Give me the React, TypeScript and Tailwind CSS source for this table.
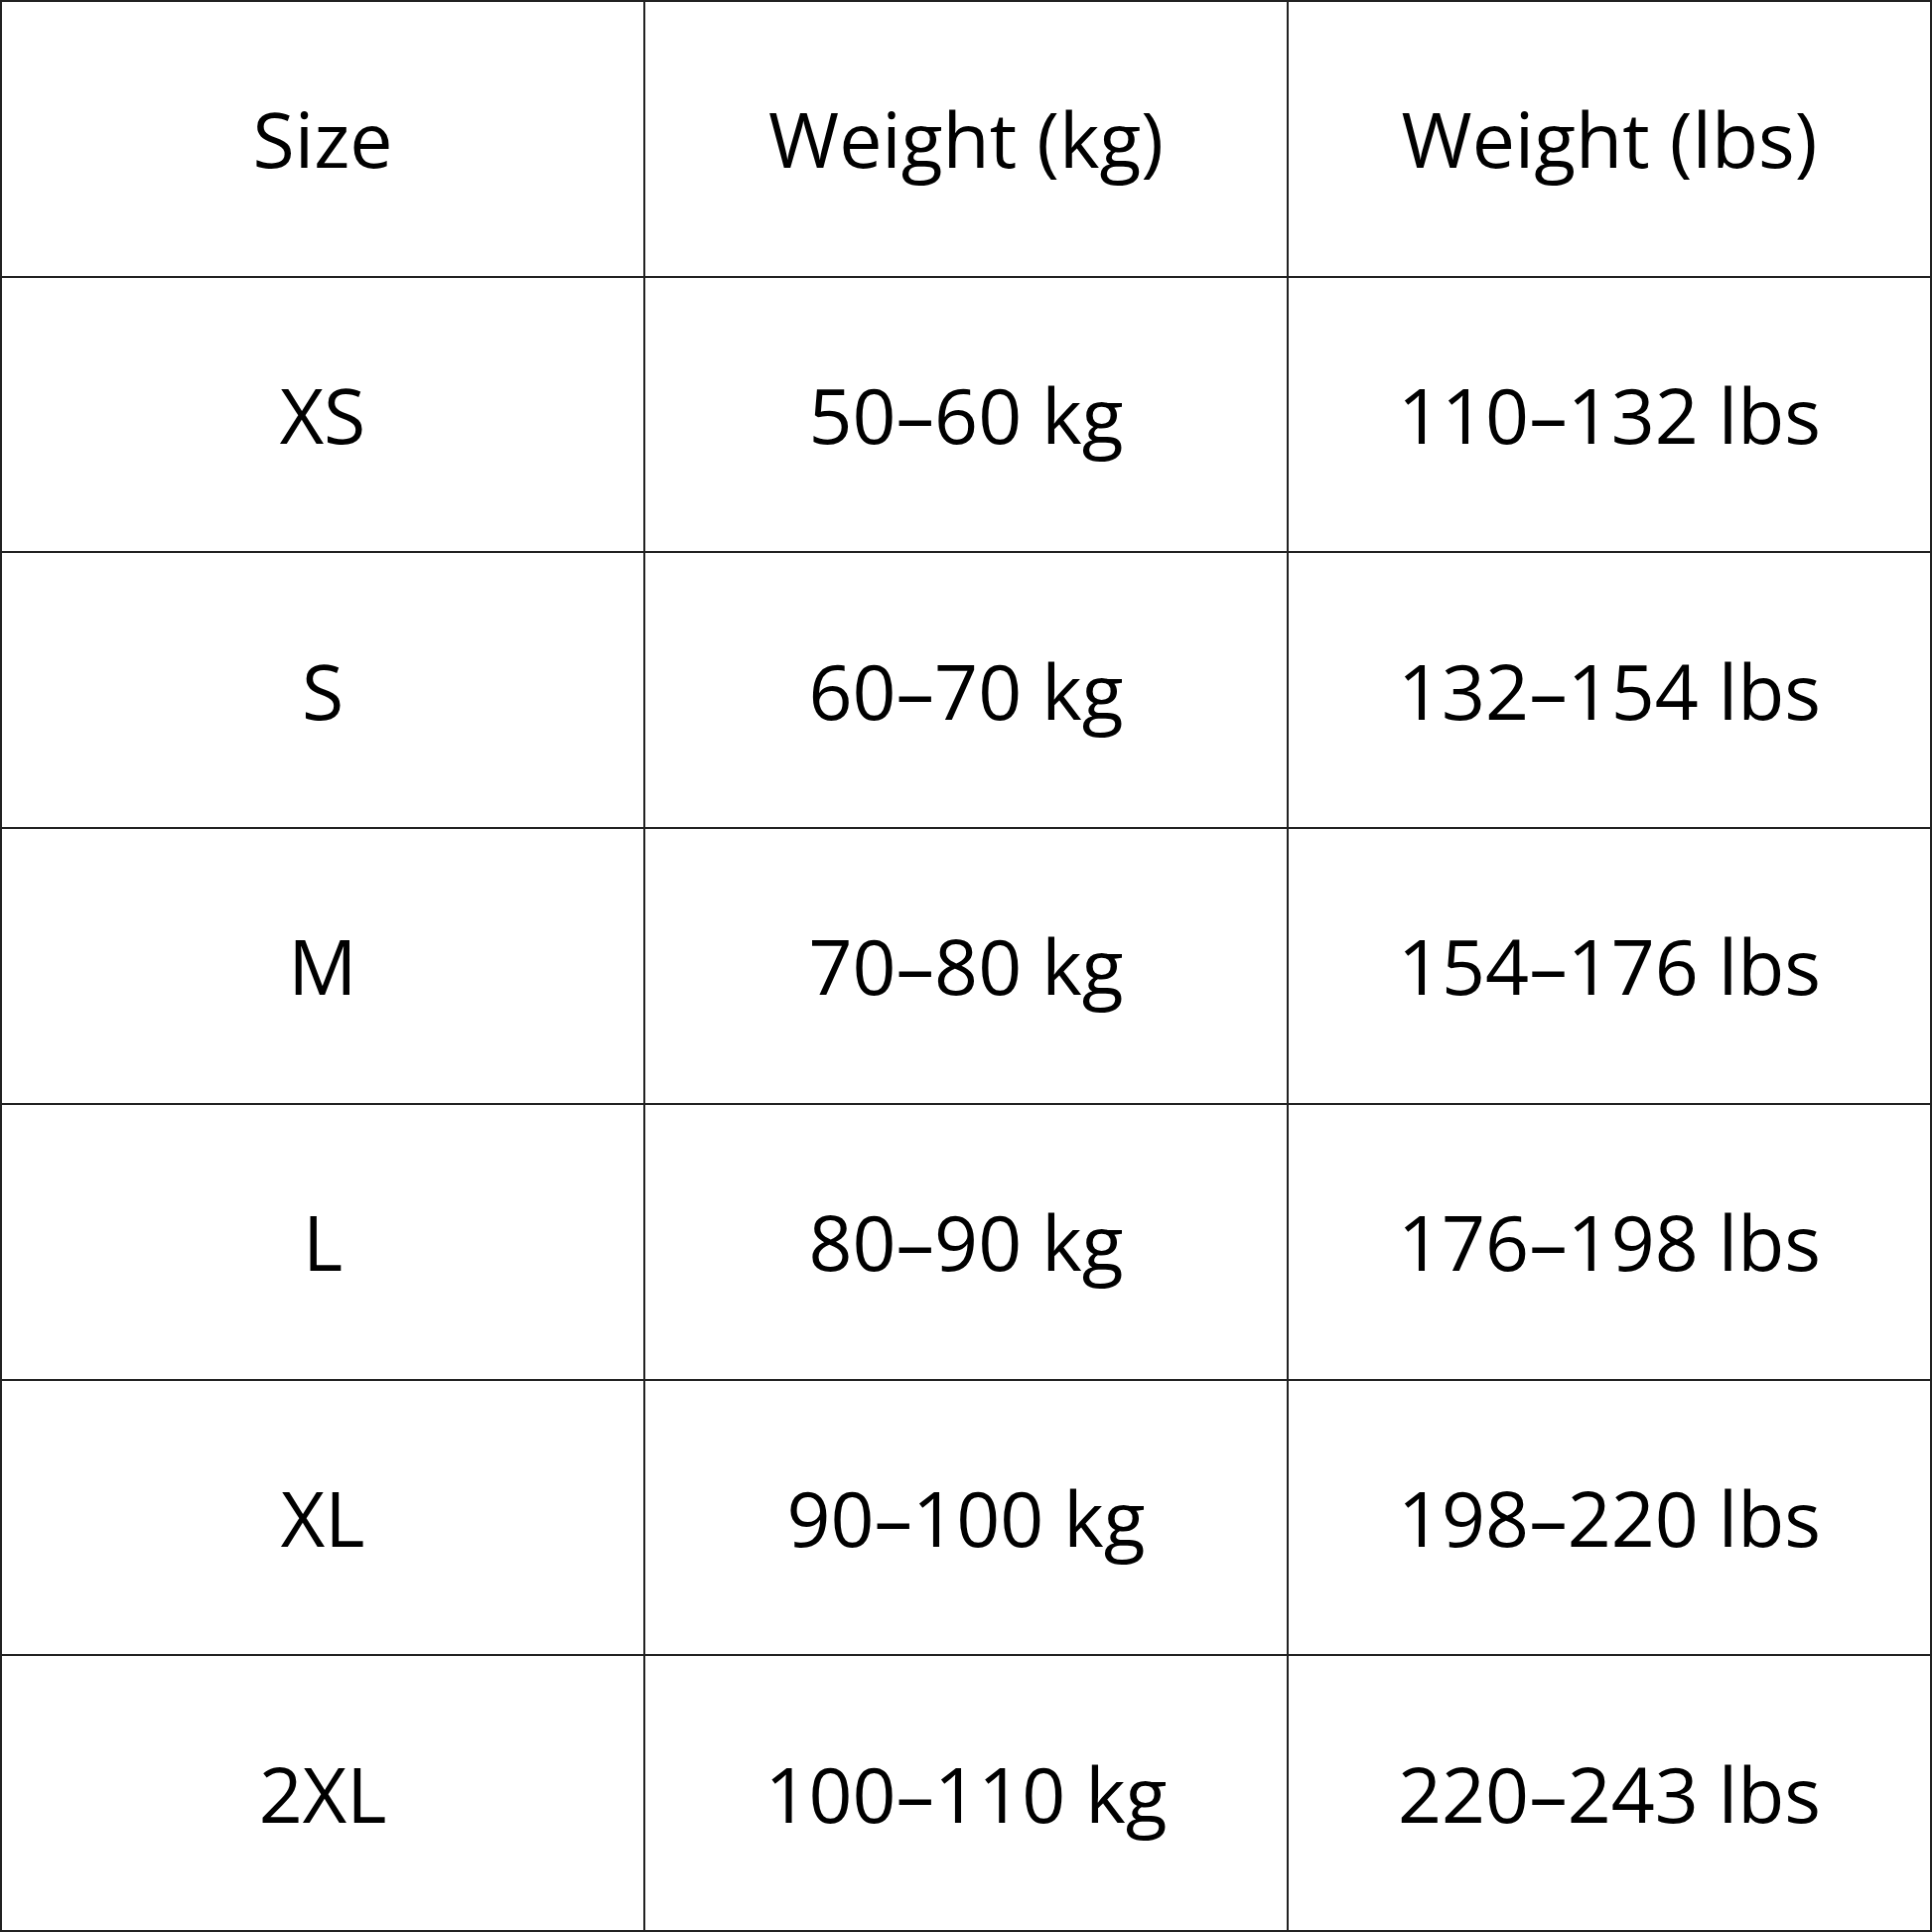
import React from "react";

const rows: [string, string, string][] = [
	["Size", "Weight (kg)", "Weight (lbs)"],
	["XS", "50–60 kg", "110–132 lbs"],
	["S", "60–70 kg", "132–154 lbs"],
	["M", "70–80 kg", "154–176 lbs"],
	["L", "80–90 kg", "176–198 lbs"],
	["XL", "90–100 kg", "198–220 lbs"],
	["2XL", "100–110 kg", "220–243 lbs"],
];

const Cell: React.FC<{ text: string }> = ({ text }) => (
	<div className="flex items-center justify-center border-r-2 border-b-2 border-[#222]">
		<span className="text-[77px] leading-none text-black">{text}</span>
	</div>
);

export default function App() {
	return (
		<div
			className="w-[1946px] h-[1946px] bg-white grid grid-cols-3 grid-rows-7 border-l-2 border-t-2 border-[#222]"
			style={{ fontFamily: '"Open Sans", sans-serif' }}
		>
			{rows.map((row, i) => (
				<React.Fragment key={i}>
					{row.map((t, j) => (
						<Cell key={j} text={t} />
					))}
				</React.Fragment>
			))}
		</div>
	);
}
